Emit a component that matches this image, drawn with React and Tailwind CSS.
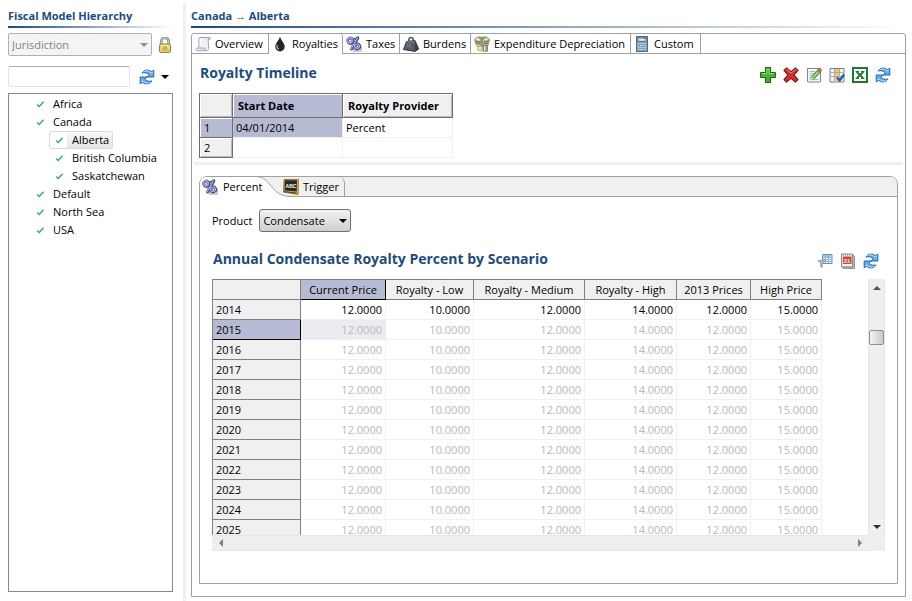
import React from "react";

const Svg = ({ children, className = "" }) => (
  <svg viewBox="0 0 16 16" className={"h-4 w-4 shrink-0 " + className} aria-hidden="true">
    {children}
  </svg>
);

const RefreshIcon = () => (
  <Svg>
    <path d="M3 4C5 .8 9.500 0 12.200 2.800L14.800 1.200V8H8l2.200-2.400C8.600 3.800 5.600 3.300 3 4Z" fill="#5fb0f0" stroke="#1d62b6" strokeLinejoin="round" />
    <path d="M13 12C11 15.200 6.500 16 3.800 13.200L1.200 14.800V8H8l-2.200 2.400C7.400 12.200 10.400 12.700 13 12Z" fill="#5fb0f0" stroke="#1d62b6" strokeLinejoin="round" />
    <path d="M4.500 3C7 1.400 9.800 1.600 12 4L14 2.800" fill="none" stroke="#c9ebff" strokeWidth=".9" />
    <path d="M11.500 13C9 14.600 6.200 14.400 4 12L2 13.200" fill="none" stroke="#c9ebff" strokeWidth=".9" />
  </Svg>
);

const LockIcon = () => (
  <Svg>
    <path d="M4.200 8V4.600a3.800 3.800 0 0 1 7.600 0V8" fill="none" stroke="#6e7670" strokeWidth="2.600" />
    <path d="M4.200 8V4.600a3.800 3.800 0 0 1 7.600 0V8" fill="none" stroke="#cfd5cd" strokeWidth="1.200" />
    <rect x="2.500" y="7" width="11" height="8.500" rx="1.500" fill="#e6d56e" stroke="#94853f" />
    <path d="M4 8.500h8M4 10.500h8" stroke="#f8efa8" />
    <path d="M4 13.500h8" stroke="#cdb548" />
    <ellipse cx="8" cy="11" rx="2.400" ry="1.500" fill="#a3935a" />
    <path d="M7 10.500l2 1" stroke="#eee3a0" strokeWidth=".8" />
  </Svg>
);

const PlusIcon = () => (
  <Svg>
    <path d="M5.500 .7h5v4.800h4.800v5h-4.800v4.800h-5v-4.800H.7v-5h4.800Z" fill="#46b52c" stroke="#1d6b12" strokeWidth="1.200" strokeLinejoin="round" />
    <path d="M6.700 2h2.600v4.700H14M2 6.700h4.700V2" fill="none" stroke="#9be27f" strokeWidth=".9" />
  </Svg>
);

const DeleteIcon = () => (
  <Svg>
    <path d="M1 3.400 3.600 1 8 4.700 12.400 1 15 3.400 11.200 8l3.800 4.600-2.600 2.500L8 11.300l-4.400 3.800L1 12.600 4.800 8Z" fill="#d12c2c" stroke="#7f1111" strokeWidth="1.100" strokeLinejoin="round" />
    <path d="M2.500 3.400l1.200-1L8 6.200l4.300-3.800 1.200 1" fill="none" stroke="#f08a83" strokeWidth=".9" />
  </Svg>
);

const EditIcon = () => (
  <Svg>
    <path d="M1.500 1.500h13v13.500h-13Z" fill="#f5f9fd" stroke="#7a8798" />
    <path d="M3.500 4.500h6M3.500 6.500h5M3.500 8.500h3M3.500 10.500h2M7.500 12.500h5" stroke="#a9bbcf" />
    <path d="M5.500 9.800 11.700 3l2.600 2.300-6.200 6.700-3.300.9Z" fill="#72c64a" stroke="#2f7d27" strokeWidth=".8" />
    <path d="M11.700 3l1.200-1.300a1 1 0 0 1 1.400 0l1 .9a1 1 0 0 1 0 1.400l-1 1.300Z" fill="#e5636b" stroke="#b03b45" strokeWidth=".6" />
    <path d="M5.500 9.800l2.600 2.200-3.300.9Z" fill="#f4dfa5" />
    <path d="M7.200 10 12 4.800" stroke="#c4f09f" />
  </Svg>
);

const GridCheckIcon = () => (
  <Svg>
    <path d="M1 1.500h14v13.500H1Z" fill="#eef2f6" stroke="#76808c" />
    <path d="M6 2h4v12.500H6Z" fill="#f7c46c" />
    <path d="M1.500 5.500h13M1.500 9.500h13M5.500 2v12.500M10.500 2v12.500" stroke="#a5afba" />
    <path d="M6 5.500h4M6 9.500h4" stroke="#dc9a3c" />
    <path d="M8 10.500l2.700 3L15 7.500" fill="none" stroke="#1f5ab8" strokeWidth="2.200" />
  </Svg>
);

const ExcelIcon = () => (
  <Svg>
    <rect x="1" y="1" width="14" height="14" fill="#fdfffd" stroke="#1c7a33" strokeWidth="2" />
    <path d="M4.700 5l6.400 6M11.300 5l-6.400 6" stroke="#1c7a33" strokeWidth="2" />
    <path d="M3.500 4.500H7M9 4.500h3.500M3.500 11.500H7M9 11.500h3.500" stroke="#1c7a33" />
  </Svg>
);

const ScrollIcon = () => (
  <Svg>
    <path d="M4.500 1.500h10c-1.500 1-1.300 3-1.200 5l.2 6c0 1.600-.8 2.200-2 2.200H2.300C.8 14.700.6 12.200 2.500 12c1.600-.2 1.600-2 1.500-4.500-.1-2.800-.8-5.400.5-6Z" fill="#eff2f6" stroke="#98a2af" />
    <path d="M2.500 12h7.700c-.6 1-.3 2.300.9 2.600" fill="#d2dae4" stroke="#98a2af" strokeWidth=".8" />
    <path d="M12.600 3.500h2.500c.5-1.200.2-2-.6-2" fill="#cbd3dd" stroke="#98a2af" strokeWidth=".8" />
    <path d="M5.500 3v5.500" stroke="#fff" strokeWidth="1.400" />
  </Svg>
);

const DropIcon = () => (
  <Svg>
    <path d="M8 .5C8.600 3.800 12.700 7 12.700 10.700a4.700 4.700 0 0 1-9.400 0C3.300 7 7.400 3.800 8 .5Z" fill="#22252a" />
    <path d="M5.300 9c-.6 2 .1 3.700 1.600 4.300" fill="none" stroke="#b9bec5" strokeWidth="1.200" />
  </Svg>
);

const PercentIcon = () => (
  <Svg>
    <path d="M12.500 3 7 14M7 15h7.500c1-1 1.200-2.500 1-4" fill="none" stroke="#b9b9c0" strokeWidth="1.600" />
    <ellipse cx="4.300" cy="4.800" rx="2.500" ry="2.700" fill="#e8e9f5" stroke="#484b84" strokeWidth="2.800" transform="rotate(-20 4.300 4.800)" />
    <ellipse cx="11.300" cy="10.500" rx="2.500" ry="2.300" fill="#e8e9f5" stroke="#484b84" strokeWidth="2.900" transform="rotate(-20 11.300 10.500)" />
    <path d="M11.800 1.800 5.500 13" stroke="#484b84" strokeWidth="3" strokeLinecap="round" />
    <path d="M6 3.500 11.500 2" stroke="#484b84" strokeWidth="1.500" />
    <path d="M11.300 2 5 13" stroke="#b3b6e6" strokeWidth="1.200" strokeLinecap="round" />
    <ellipse cx="4" cy="4.500" rx="2.400" ry="2.600" fill="none" stroke="#b3b6e6" strokeWidth="1.100" />
    <ellipse cx="11" cy="10.200" rx="2.400" ry="2.200" fill="none" stroke="#b3b6e6" strokeWidth="1.100" />
  </Svg>
);

const WeightIcon = () => (
  <Svg>
    <path d="M6 5.500C4.500.5 11 .2 10.500 5" fill="none" stroke="#4f565c" strokeWidth="1.600" />
    <path d="M3.500 5.500 12 4.500l3.700 8.500-3.700 2.500L.5 13.500Z" fill="#555e66" stroke="#31383e" strokeLinejoin="round" />
    <path d="M12 4.800l-.2 10.400 3.500-2.200Z" fill="#3a4147" />
    <path d="M3.800 5.800l7.800.2" stroke="#89939c" strokeWidth=".9" />
    <path d="M3.500 8.200l4.500.3M3 10.200l5.500.4" stroke="#717c86" />
  </Svg>
);

const MoneyIcon = () => (
  <Svg>
    <path d="M.5 3.500 3.500 1H13l2.700 2.500-1 4-1.200 3H3.500l-2-3Z" fill="#b3ab92" stroke="#8a8268" strokeWidth=".7" />
    <path d="M1.300 3.500 4.300 1.600l3.700.9 4-1L14.800 3.200l-3.300 1.400L8 4.100l-3.500 1Z" fill="#e9e4d0" />
    <path d="M4.800 1.300l3.500 2.400M11.500 1.200 7.500 3.800v5.700" fill="none" stroke="#6f9b52" strokeWidth="1.700" />
    <path d="M1.500 5.200l5 .7M2 7l4.500.6M9.500 6l5-.7M9.500 8l4.500-.7" stroke="#6f6750" strokeWidth=".9" />
    <path d="M3 8.800l3.500.6M9.500 9.400l4-.6" stroke="#e4dec8" strokeWidth=".8" />
    <ellipse cx="6" cy="12.800" rx="2.700" ry="2.300" fill="#ead98a" stroke="#b5a050" strokeWidth=".7" />
    <ellipse cx="6" cy="11.800" rx="1.800" ry=".8" fill="#f8f0c0" />
    <path d="M9 9.500h4.500v5.700H9Z" fill="#a9a9a2" stroke="#6d6d68" strokeWidth=".8" />
    <path d="M10.500 10v5" stroke="#e8e8e4" />
  </Svg>
);

const CalculatorIcon = () => (
  <Svg>
    <rect x="2.500" y=".5" width="11" height="15" fill="#7d9fb9" stroke="#4a708e" />
    <rect x="4" y="2" width="8" height="3.200" fill="#dff1cf" stroke="#355b78" strokeWidth=".7" />
    <path d="M9.500 2.300h2.500" stroke="#cc4c3c" />
    <path d="M4 7.500h8M4 9.500h8M4 11.500h8M4 13.500h8" stroke="#d9ecf9" strokeDasharray="1.200 1" />
  </Svg>
);

const BoardIcon = () => (
  <Svg>
    <path d="M1 .5h14.500l-.5 15L.5 13Z" fill="#e5b548" stroke="#8d6118" strokeWidth=".8" />
    <path d="M1.800 1.300H14l-.3 11.200-12.100-1Z" fill="#25282a" />
    <path d="M.8 12.600l12.900 1.500" stroke="#6f4410" strokeWidth="1.200" />
    <text x="2.600" y="8.500" className="fill-white font-['Liberation_Sans',sans-serif] text-[5px] font-bold">ABC</text>
  </Svg>
);

const FilterGridIcon = () => (
  <Svg>
    <path d="M5.500 1.500h9.500v9h-9.500Z" fill="#eaf4fa" stroke="#5d92b4" />
    <path d="M5.500 2h9.500v2h-9.500Z" fill="#a6cbe0" />
    <path d="M5.500 4.500h9.500M5.500 6.500h9.500M5.500 8.500h9.500M8.500 2v8.500M11.500 2v8.500" stroke="#7eabc8" strokeWidth=".8" />
    <path d="M1 7.500h7L5.300 10.500v4l-1.700-1v-3Z" fill="#b9bec2" stroke="#878e93" strokeWidth=".7" />
  </Svg>
);

const CalendarIcon = () => (
  <Svg>
    <path d="M12.500 1.500l2 1.500V15.500H3.500L2 13.800Z" fill="#b4bac2" stroke="#7a838d" strokeWidth=".8" />
    <path d="M1.500 1h11v12.800h-11Z" fill="#f5f6f8" stroke="#76808b" strokeWidth=".9" />
    <path d="M2.800 3.500h8.700v7.500H2.800Z" fill="#d8432f" />
    <path d="M3 2h8.500" stroke="#5d6670" strokeDasharray="1 1" />
    <text x="3.600" y="9.500" className="fill-white font-['Liberation_Sans',sans-serif] text-[6px] font-bold">31</text>
  </Svg>
);

const CheckIcon = () => (
  <svg viewBox="0 0 9 9" className="h-[9px] w-[9px] shrink-0" aria-hidden="true">
    <path d="M1.200 4.500 3.200 6.400 7.600 1.800" fill="none" stroke="#2eb257" strokeWidth="1.400" />
  </svg>
);

const Arrow = ({ className }) => (
  <svg viewBox="0 0 8 4" className={"h-1 w-2 " + className} aria-hidden="true">
    <path d="M0 0h8L4 4Z" fill="currentColor" />
  </svg>
);

const TREE = [
  { name: "Africa" },
  { name: "Canada", children: ["Alberta", "British Columbia", "Saskatchewan"] },
  { name: "Default" },
  { name: "North Sea" },
  { name: "USA" },
];

const TABS = [
  { label: "Overview", Icon: ScrollIcon, width: "w-[77px]" },
  { label: "Royalties", Icon: DropIcon, width: "w-[74px]", active: true },
  { label: "Taxes", Icon: PercentIcon, width: "w-[57px]" },
  { label: "Burdens", Icon: WeightIcon, width: "w-[71px]" },
  { label: "Expenditure Depreciation", Icon: MoneyIcon, width: "w-[160px]" },
  { label: "Custom", Icon: CalculatorIcon, width: "w-[70px]" },
];

const TOOLS = [
  ["Add", PlusIcon],
  ["Delete", DeleteIcon],
  ["Edit", EditIcon],
  ["Choose columns", GridCheckIcon],
  ["Export to Excel", ExcelIcon],
  ["Refresh", RefreshIcon],
];

const GRID_TOOLS = [
  ["Filter", FilterGridIcon],
  ["Calendar", CalendarIcon],
  ["Refresh", RefreshIcon],
];

const COLUMNS = ["Current Price", "Royalty - Low", "Royalty - Medium", "Royalty - High", "2013 Prices", "High Price"];
const VALUES = ["12.0000", "10.0000", "12.0000", "14.0000", "12.0000", "15.0000"];
const YEARS = [2014, 2015, 2016, 2017, 2018, 2019, 2020, 2021, 2022, 2023, 2024, 2025];

function Toolbar({ items }) {
  return (
    <div className="flex gap-[7px]">
      {items.map(([label, Icon]) => (
        <button key={label} type="button" aria-label={label} className="h-4 w-4">
          <Icon />
        </button>
      ))}
    </div>
  );
}

function Sidebar() {
  return (
    <aside className="flex w-[183px] shrink-0 flex-col pt-[7px] pr-[10px] pb-[9px] pl-2">
      <h2 className="h-[18px] text-[11px] leading-[18px] font-bold text-[#1a4b84]">Fiscal Model Hierarchy</h2>
      <div className="mt-px h-[2px] bg-linear-to-r from-[#1a4b84] to-white" />
      <div className="mt-[5px] flex items-center gap-[5px]">
        <div className="relative">
          <select aria-label="Level" disabled className="h-[23px] w-[144px] appearance-none rounded-xs border border-[#b0b0b0] bg-[#f4f4f4] pl-[3px] text-[#838383] opacity-100">
            <option>Jurisdiction</option>
          </select>
          <Arrow className="absolute top-[10px] right-1 text-[#909090]" />
        </div>
        <button type="button" aria-label="Lock" className="h-4 w-4">
          <LockIcon />
        </button>
      </div>
      <div className="mt-[10px] flex items-center">
        <input aria-label="Search" type="text" className="h-[21px] w-[122px] rounded-xs border border-[#dfe3ea] border-t-[#abadb3] bg-white px-1 outline-none" />
        <button type="button" aria-label="Refresh" className="ml-[9px] h-4 w-4">
          <RefreshIcon />
        </button>
        <button type="button" aria-label="Refresh options" className="ml-[6px] flex h-4 w-2 items-center">
          <Arrow className="text-black" />
        </button>
      </div>
      <ul className="mt-[6px] min-h-0 flex-1 border border-[#828790] pt-px">
        {TREE.map((node) => (
          <li key={node.name}>
            <div className="flex h-[18px] items-center gap-2 pl-[27px]">
              <CheckIcon />
              {node.name}
            </div>
            {node.children && (
              <ul>
                {node.children.map((child, i) => (
                  <li key={child} className="flex pl-10">
                    {i === 0 ? (
                      <div className="flex h-[18px] items-center rounded-[3px] border border-[#d9d9d9] pl-[5px]">
                        <CheckIcon />
                        <span className="ml-[3px] h-4 bg-linear-to-b from-[#f8f8f8] to-[#e5e5e5] px-[5px] pr-[3px] leading-4">{child}</span>
                      </div>
                    ) : (
                      <div className="flex h-[18px] items-center gap-2 pl-[6px]">
                        <CheckIcon />
                        {child}
                      </div>
                    )}
                  </li>
                ))}
              </ul>
            )}
          </li>
        ))}
      </ul>
    </aside>
  );
}

function MainTabs() {
  return (
    <div role="tablist" className="flex h-5">
      {TABS.map(({ label, Icon, width, active }) => (
        <button
          key={label}
          type="button"
          role="tab"
          aria-selected={!!active}
          className={
            "flex shrink-0 items-center gap-1 border-r border-[#a0a0a0] pl-[3px] whitespace-nowrap " +
            width +
            (active ? " rounded-t-[3px]" : " border-b")
          }
        >
          <Icon />
          {label}
        </button>
      ))}
      <div className="flex-1 border-b border-[#a0a0a0]" />
    </div>
  );
}

function TimelineTable() {
  const head = "border-r border-b border-[#707070] px-[5px] text-left font-bold";
  const rowHead = "border-r border-b border-[#707070] px-1 text-left font-normal";
  const raised = " shadow-[inset_1px_1px_0_#fff,inset_-1px_-1px_0_#b8b8b8]";
  const cell = "border-r border-b border-[#f0f0f0] px-[3px]";
  return (
    <table className="table-fixed border-separate border-spacing-0 border-t border-l border-[#707070]">
      <colgroup>
        <col className="w-[33px]" />
        <col className="w-[110px]" />
        <col className="w-[110px]" />
      </colgroup>
      <thead>
        <tr className="h-6">
          <td className={head + raised + " bg-[#f0f0f0]"} />
          <th scope="col" className={head + raised + " bg-[#b5bbd3]"}>Start Date</th>
          <th scope="col" className={head + raised + " bg-[#f0f0f0]"}>Royalty Provider</th>
        </tr>
      </thead>
      <tbody>
        <tr className="h-5">
          <th scope="row" className={rowHead + raised + " bg-[#b5bbd3]"}>1</th>
          <td className={cell + " bg-[#b5bbd3]"}>04/01/2014</td>
          <td className={cell}>Percent</td>
        </tr>
        <tr className="h-5">
          <th scope="row" className={rowHead + raised + " bg-[#f0f0f0]"}>2</th>
          <td className={cell} />
          <td className={cell} />
        </tr>
      </tbody>
    </table>
  );
}

function RoyaltyGrid() {
  return (
    <table className="w-[610px] table-fixed border-separate border-spacing-0 border-t border-l border-[#808080] leading-3">
      <colgroup>
        <col className="w-[88px]" />
        <col className="w-[85px]" />
        <col className="w-[88px]" />
        <col className="w-[111px]" />
        <col className="w-[92px]" />
        <col className="w-[74px]" />
        <col className="w-[71px]" />
      </colgroup>
      <thead>
        <tr className="h-5">
          <td className="border-r border-b border-[#808080] bg-[#f0f0f0]" />
          {COLUMNS.map((name, i) => (
            <th
              key={name}
              scope="col"
              className={
                "border-r border-b text-center font-normal whitespace-nowrap " +
                (i === 0 ? "border-black bg-[#b5bbd3]" : "border-[#808080] bg-[#f0f0f0]")
              }
            >
              {name}
            </th>
          ))}
        </tr>
      </thead>
      <tbody>
        {YEARS.map((year) => (
          <tr key={year} className="h-5">
            <th
              scope="row"
              className={
                "border-r border-b pl-[3px] text-left font-normal " +
                (year === 2015 ? "border-black bg-[#b5bbd3]" : "border-[#808080] bg-[#f0f0f0]")
              }
            >
              {year}
            </th>
            {VALUES.map((value, i) => (
              <td
                key={i}
                className={
                  "border-r border-b border-[#f0f0f0] pr-[3px] text-right " +
                  (year === 2014 ? "text-black" : "text-[#b8b8b8]") +
                  (year === 2015 && i === 0 ? " bg-[#ebecf2]" : "")
                }
              >
                {value}
              </td>
            ))}
          </tr>
        ))}
      </tbody>
    </table>
  );
}

function ScrollPane({ children }) {
  return (
    <div className="grid min-h-0 flex-1 grid-cols-[minmax(0,1fr)_17px] grid-rows-[minmax(0,1fr)_16px]">
      <div className="overflow-hidden">{children}</div>
      <div className="flex flex-col items-center justify-between border-x border-[#e6e6e6] bg-[#efefef]">
        <div className="flex flex-col items-center">
          <button type="button" aria-label="Scroll up" className="flex h-[17px] w-[15px] items-center justify-center">
            <Arrow className="rotate-180 text-[#505050]" />
          </button>
          <div className="mt-[34px] h-[15px] w-[15px] rounded-xs border border-[#8d8d8d] bg-linear-to-r from-[#f5f5f5] to-[#c9c9cc]" />
        </div>
        <button type="button" aria-label="Scroll down" className="flex h-[17px] w-[15px] items-center justify-center">
          <Arrow className="text-[#303030]" />
        </button>
      </div>
      <div className="flex items-center justify-between border-y border-[#e6e6e6] bg-[#eeeeee]">
        <button type="button" aria-label="Scroll left" className="flex h-[14px] w-[17px] items-center justify-center">
          <Arrow className="rotate-90 text-[#808080]" />
        </button>
        <button type="button" aria-label="Scroll right" className="flex h-[14px] w-[17px] items-center justify-center">
          <Arrow className="-rotate-90 text-[#808080]" />
        </button>
      </div>
      <div className="bg-[#eeeeee]" />
    </div>
  );
}

function PercentPanel() {
  return (
    <section className="flex min-h-0 flex-1 flex-col rounded-t-lg border border-[#a0a0a0]">
      <div role="tablist" className="relative flex h-5 shrink-0 rounded-t-[7px] border-b border-[#a0a0a0] bg-[#f0f0f0]">
        <svg viewBox="0 0 92 20" className="absolute top-0 left-0 h-5 w-[92px]" aria-hidden="true">
          <path d="M0 20V7C0 3 3 0 7 0H56C72 0 72 19.500 90 19.500V20Z" fill="#fff" />
          <path d="M56 -.5C72 0 70 19.500 91 19.500" fill="none" stroke="#a0a0a0" />
        </svg>
        <button type="button" role="tab" aria-selected="true" className="relative flex w-20 items-center gap-[5px] pl-[2px]">
          <PercentIcon />
          Percent
        </button>
        <button type="button" role="tab" aria-selected="false" className="relative flex w-[65px] items-center gap-1 rounded-tr-[6px] border-r border-[#a0a0a0] pl-[3px]">
          <BoardIcon />
          Trigger
        </button>
      </div>
      <div className="flex min-h-0 flex-1 flex-col px-3 pt-3 pb-8">
        <div className="flex items-center gap-[7px]">
          <label htmlFor="product">Product</label>
          <div className="relative">
            <select id="product" className="h-[23px] w-[92px] appearance-none rounded-[3px] border border-[#707070] bg-linear-to-b from-[#f2f2f2] to-[#cfcfcf] pl-[3px]">
              <option>Condensate</option>
            </select>
            <Arrow className="absolute top-[10px] right-1 text-black" />
          </div>
        </div>
        <div className="mt-[17px] mb-[10px] flex h-5 items-end justify-between pr-[6px] pl-px">
          <h3 className="text-sm leading-5 font-bold text-[#1a4b84]">Annual Condensate Royalty Percent by Scenario</h3>
          <Toolbar items={GRID_TOOLS} />
        </div>
        <ScrollPane>
          <RoyaltyGrid />
        </ScrollPane>
      </div>
    </section>
  );
}

export default function App() {
  return (
    <div className="flex h-screen bg-white font-['Open_Sans','Noto_Sans',sans-serif] text-[11px] leading-[18px] text-black">
      <Sidebar />
      <div className="mt-[3px] w-[3px] shrink-0 bg-[#f0f0f0]" />
      <main className="flex min-w-0 flex-1 flex-col pt-[7px] pr-[6px] pb-1 pl-[5px]">
        <h1 className="h-[18px] text-[11px] leading-[18px] font-bold text-[#1a4b84]">Canada → Alberta</h1>
        <div className="mt-px h-[2px] shrink-0 bg-linear-to-r from-[#1a4b84] to-white" />
        <div className="mt-[5px] flex min-h-0 flex-1 flex-col rounded-t-[3px] border border-[#a0a0a0]">
          <MainTabs />
          <div className="flex items-end justify-between pt-[9px] pr-[14px] pb-[10px] pl-2">
            <h2 className="text-sm leading-5 font-bold text-[#1a4b84]">Royalty Timeline</h2>
            <Toolbar items={TOOLS} />
          </div>
          <div className="pl-[7px]">
            <TimelineTable />
          </div>
          <div className="mx-[2px] mt-1 h-[3px] shrink-0 bg-[#f0f0f0]" />
          <div className="flex min-h-0 flex-1 flex-col px-[7px] pt-[11px] pb-3">
            <PercentPanel />
          </div>
        </div>
      </main>
    </div>
  );
}
